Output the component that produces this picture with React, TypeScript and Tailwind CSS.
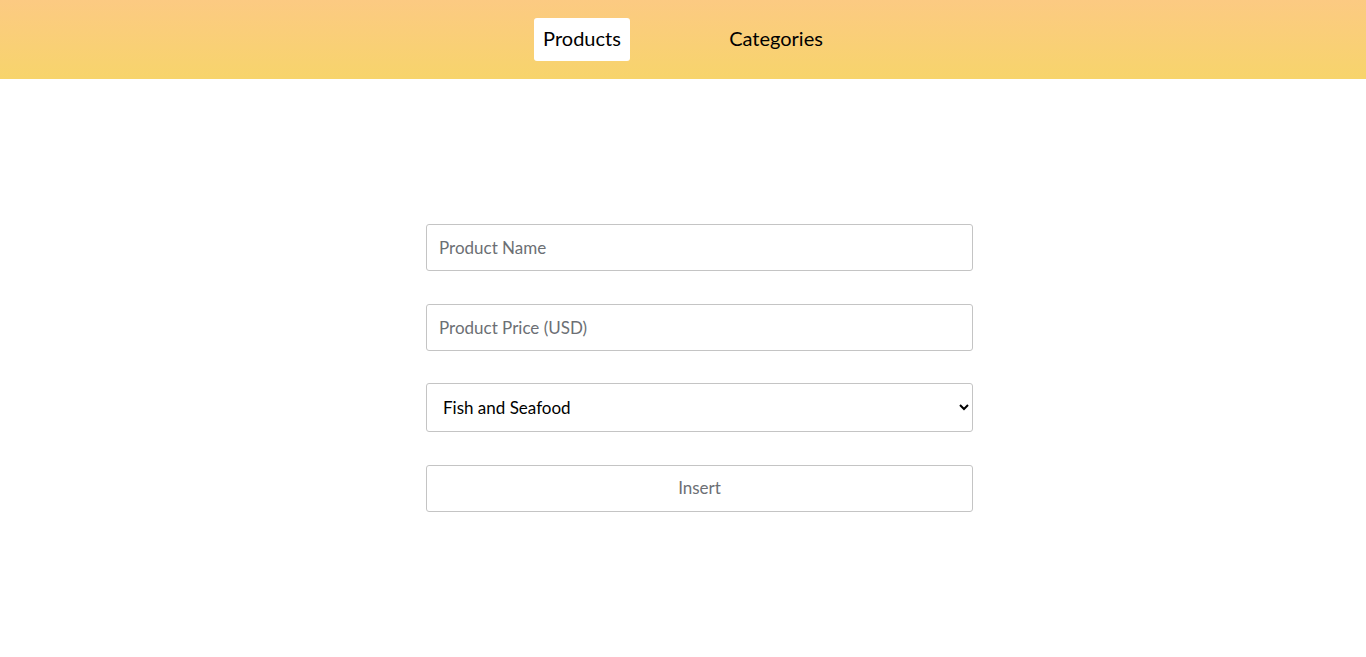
import { useState } from "react";

export default function App() {
  const [name, setName] = useState("")
  const [price, setPrice] = useState("")
  const [category, setCategory] = useState("Fish and Seafood")

  return (
  <div className="min-h-[657px] bg-white font-['Lato','Noto_Sans',sans-serif] text-black">

  {/* NAV */}

  <header className="h-[79px] bg-linear-to-b from-[#fcca82] to-[#f7d46b] flex justify-center items-start pt-[18px] gap-[90px]">

  <a className="w-[96px] h-[43px] pb-[3px] flex items-center justify-center bg-white rounded-[3px] text-[20px] cursor-pointer">
  Products
  </a>

  <a className="w-[112px] h-[43px] pb-[3px] flex items-center justify-center rounded-[3px] text-[20px] cursor-pointer">
  Categories
  </a>

  </header>


  {/* FORM */}

  <main className="pt-[145px]">

  <form className="ml-[426px] w-[547px] flex flex-col" onSubmit={e=>e.preventDefault()}>

  <input
  value={name}
  onChange={e=>setName(e.target.value)}
  placeholder="Product Name"
  className="h-[47px] px-3 pb-[1px] border border-[#c4c4c4] rounded-[3px] text-[17px] placeholder:text-[#6c6f74] outline-none"
  />

  <input
  value={price}
  onChange={e=>setPrice(e.target.value)}
  placeholder="Product Price (USD)"
  className="mt-[33px] h-[47px] px-3 pb-[1px] border border-[#c4c4c4] rounded-[3px] text-[17px] placeholder:text-[#6c6f74] outline-none"
  />

  <select
  value={category}
  onChange={e=>setCategory(e.target.value)}
  className="mt-[32px] h-[49px] pl-[12px] pr-2 pb-[1px] border border-[#c4c4c4] rounded-[3px] text-[17px] bg-white outline-none"
  >
  <option>Fish and Seafood</option>
  <option>Dairy</option>
  <option>Bakery</option>
  <option>Produce</option>
  </select>

  <button
  type="submit"
  className="mt-[33px] h-[47px] pb-[1px] border border-[#c4c4c4] rounded-[3px] bg-white text-[17px] text-[#6c6f74]"
  >
  Insert
  </button>

  </form>

  </main>

  </div>
  )
}
